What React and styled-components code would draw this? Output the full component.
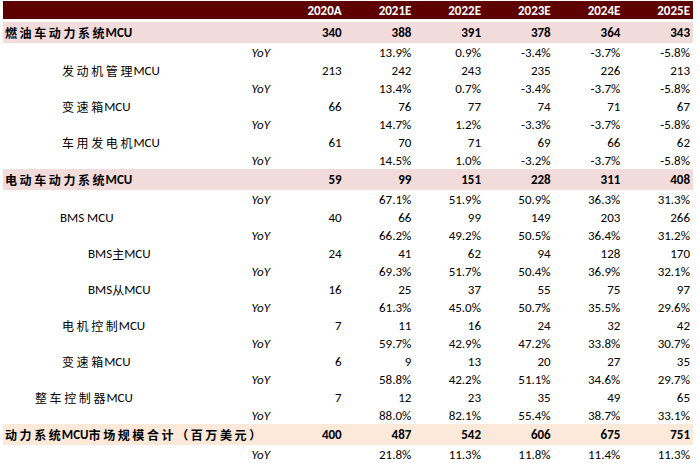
import React from "react";
import styled, { createGlobalStyle } from "styled-components";

const GlobalStyle = createGlobalStyle`
  html, body { margin: 0; padding: 0; background: #ffffff; }
  body {
    font-family: Carlito, Lato, "Noto Sans CJK SC", sans-serif;
    color: #000000;
  }
`;

const COLS = "272px repeat(6, 1fr)";

const Table = styled.div`
  width: 700px;
  box-sizing: border-box;
  padding: 1px 7px 0 3px;
  display: flex;
  flex-direction: column;
`;

const HeaderRow = styled.div`
  display: grid;
  grid-template-columns: ${COLS};
  height: 18px;
  margin-bottom: 3px;
  background: #5e0000;
  color: #ffffff;
  font-weight: 700;
  font-size: 13px;
`;

const Row = styled.div`
  display: grid;
  grid-template-columns: ${COLS};
  height: ${(p) => (p.$strong ? 21 : 18)}px;
  background: ${(p) => p.$bg || "transparent"};
  font-weight: ${(p) => (p.$strong ? 700 : 400)};
  font-size: 13px;
`;

const Cell = styled.div`
  display: flex;
  align-items: center;
  justify-content: flex-end;
  padding-right: 3px;
  white-space: nowrap;
`;

const LabelCell = styled.div`
  display: flex;
  align-items: center;
  padding-left: ${(p) => p.$indent}px;
  white-space: nowrap;
`;

const YoYCell = styled.div`
  display: flex;
  align-items: center;
  justify-content: flex-end;
  padding-right: 5px;
  font-style: italic;
`;

const Cjk = styled.span`
  font-family: "Noto Sans CJK SC", sans-serif;
  font-size: 12px;
  letter-spacing: ${(p) => (p.$tight ? 0 : 2.6)}px;
  margin-right: ${(p) => (p.$tight || p.$last ? 0 : -1.6)}px;
`;

const Latin = styled.span`
  font-family: Carlito, Lato, sans-serif;
`;

const years = ["2020A", "2021E", "2022E", "2023E", "2024E", "2025E"];

const PINK = "#f2dcdb";
const PEACH = "#fde9d9";

const data = [
  { label: "燃油车动力系统MCU", indent: 2, strong: true, bg: PINK, v: ["340", "388", "391", "378", "364", "343"], y: ["13.9%", "0.9%", "-3.4%", "-3.7%", "-5.8%"] },
  { label: "发动机管理MCU", indent: 59, v: ["213", "242", "243", "235", "226", "213"], y: ["13.4%", "0.7%", "-3.4%", "-3.7%", "-5.8%"] },
  { label: "变速箱MCU", indent: 59, v: ["66", "76", "77", "74", "71", "67"], y: ["14.7%", "1.2%", "-3.3%", "-3.7%", "-5.8%"] },
  { label: "车用发电机MCU", indent: 59, v: ["61", "70", "71", "69", "66", "62"], y: ["14.5%", "1.0%", "-3.2%", "-3.7%", "-5.8%"] },
  { label: "电动车动力系统MCU", indent: 2, strong: true, bg: PINK, v: ["59", "99", "151", "228", "311", "408"], y: ["67.1%", "51.9%", "50.9%", "36.3%", "31.3%"] },
  { label: "BMS MCU", indent: 57, v: ["40", "66", "99", "149", "203", "266"], y: ["66.2%", "49.2%", "50.5%", "36.4%", "31.2%"] },
  { label: "BMS主MCU", indent: 85, tight: true, v: ["24", "41", "62", "94", "128", "170"], y: ["69.3%", "51.7%", "50.4%", "36.9%", "32.1%"] },
  { label: "BMS从MCU", indent: 85, tight: true, v: ["16", "25", "37", "55", "75", "97"], y: ["61.3%", "45.0%", "50.7%", "35.5%", "29.6%"] },
  { label: "电机控制MCU", indent: 59, v: ["7", "11", "16", "24", "32", "42"], y: ["59.7%", "42.9%", "47.2%", "33.8%", "30.7%"] },
  { label: "变速箱MCU", indent: 59, v: ["6", "9", "13", "20", "27", "35"], y: ["58.8%", "42.2%", "51.1%", "34.6%", "29.7%"] },
  { label: "整车控制器MCU", indent: 32, v: ["7", "12", "23", "35", "49", "65"], y: ["88.0%", "82.1%", "55.4%", "38.7%", "33.1%"] },
  { label: "动力系统MCU市场规模合计（百万美元）", indent: 2, strong: true, bg: PEACH, v: ["400", "487", "542", "606", "675", "751"], y: ["21.8%", "11.3%", "11.8%", "11.4%", "11.3%"] },
];

function Label({ text, tight }) {
  const parts = text.split(/([A-Za-z ]+)/).filter(Boolean);
  return parts.map((p, i) =>
    /[A-Za-z]/.test(p) ? (
      <Latin key={i}>{p}</Latin>
    ) : (
      <Cjk key={i} $tight={tight} $last={i === parts.length - 1}>{p}</Cjk>
    )
  );
}

export default function App() {
  return (
    <>
      <GlobalStyle />
      <Table>
        <HeaderRow>
          <div />
          {years.map((y) => (
            <Cell key={y}>{y}</Cell>
          ))}
        </HeaderRow>
        {data.map((r, i) => (
          <React.Fragment key={i}>
            <Row $strong={r.strong} $bg={r.bg}>
              <LabelCell $indent={r.indent}>
                <Label text={r.label} tight={r.tight} />
              </LabelCell>
              {r.v.map((x, j) => (
                <Cell key={j}>{x}</Cell>
              ))}
            </Row>
            <Row>
              <YoYCell>YoY</YoYCell>
              <Cell />
              {r.y.map((x, j) => (
                <Cell key={j}>{x}</Cell>
              ))}
            </Row>
          </React.Fragment>
        ))}
      </Table>
    </>
  );
}
